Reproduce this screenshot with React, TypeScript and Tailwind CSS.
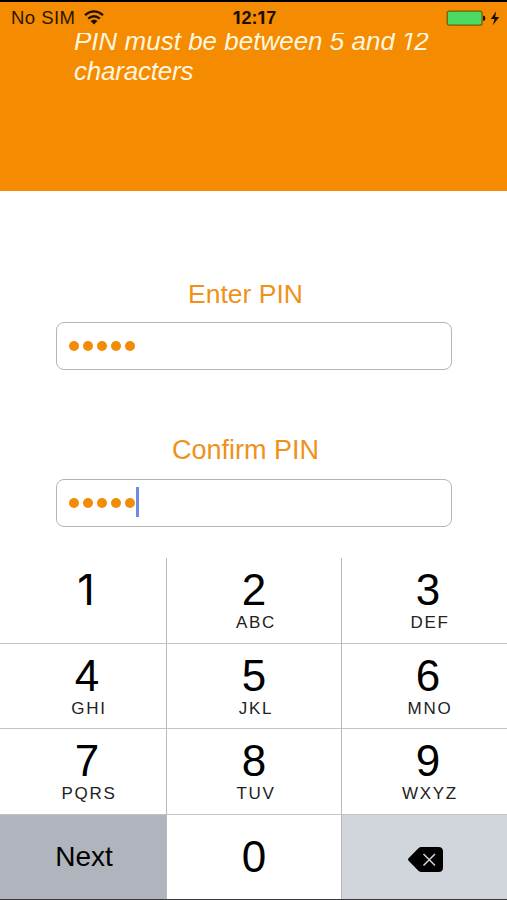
import React from "react";

type KeyDef = { digit: string; letters: string };

const rows: KeyDef[][] = [
  [
    { digit: "1", letters: "" },
    { digit: "2", letters: "ABC" },
    { digit: "3", letters: "DEF" },
  ],
  [
    { digit: "4", letters: "GHI" },
    { digit: "5", letters: "JKL" },
    { digit: "6", letters: "MNO" },
  ],
  [
    { digit: "7", letters: "PQRS" },
    { digit: "8", letters: "TUV" },
    { digit: "9", letters: "WXYZ" },
  ],
];

const cellStyles = [
  "border-r border-[#b9b9bb] pl-[8px]",
  "border-r border-[#b9b9bb]",
  "pl-[7px]",
];

function StatusBar() {
  return (
    <header className="flex h-[33px] items-center border-t-2 border-black pl-[11px] pr-[7px] text-[#2a1800]">
      <div className="flex flex-1 items-center gap-[9px]">
        <span className="text-[18.5px] leading-[31px] tracking-[0.45px] whitespace-nowrap">No SIM</span>
        <svg width="20" height="15" viewBox="0 0 20 15" fill="none" stroke="#1c1000" strokeWidth="2.3">
          <path d="M1 5.2Q10-2.4 19 5.2" />
          <path d="M4.2 8.7Q10 3.8 15.8 8.7" />
          <path d="M6.5 11.1Q10 8.1 13.5 11.1L10 14.5Z" fill="#1c1000" stroke="none" />
        </svg>
      </div>
      <span className="mt-px mr-[2px] text-[18px] font-bold leading-[31px] text-[#1c1000]">
        <span className="mr-px font-['Inter']">1</span>2:<span className="mr-px font-['Inter']">1</span>7
      </span>
      <div className="flex flex-1 items-center justify-end">
        <svg width="54" height="18" viewBox="0 0 54 18">
          <rect x="1.2" y="2.2" width="34.8" height="14" rx="2" fill="#4cd964" stroke="#756000" strokeWidth="1.3" />
          <path d="M37 6.7h.8q1.5 0 1.5 2.5t-1.5 2.5H37z" fill="#1c1000" />
          <path d="M50.2 2.2L44.8 10h3.7l-1.7 6.3L53.2 8h-4z" fill="#1c1000" />
        </svg>
      </div>
    </header>
  );
}

function PinField({ label, active = false }: { label: string; active?: boolean }) {
  return (
    <div className="flex flex-col items-center">
      <label
        className={`h-[30px] pr-[16px] leading-[30px] text-[#ee921a] ${
          active ? "-mt-px mb-px text-[27px]" : "text-[26.5px]"
        }`}
      >
        {label}
      </label>
      <div className="mt-[13px] flex h-[48px] w-[396px] items-center rounded-[8px] border border-[#b5b5b5] bg-white pl-[12px]">
        <div className="flex gap-[4.2px] pb-px">
          {[0, 1, 2, 3, 4].map((dot) => (
            <span key={dot} className="size-[10px] rounded-full bg-[#f28c06]" />
          ))}
        </div>
        {active && <span className="mb-[3px] ml-px h-[30px] w-[3px] bg-[#6f8ae8]" />}
      </div>
    </div>
  );
}

export default function App() {
  return (
    <main className="flex h-[900px] w-[507px] flex-col overflow-hidden bg-white font-['Liberation_Sans',Arial,sans-serif]">
      <section className="h-[191px] bg-[#f58b00]">
        <StatusBar />
        <div className="h-[60px] overflow-hidden pl-[74px]">
          <p className="-mt-[7px] w-[370px] text-[26px] leading-[30px] text-[#fff6df] italic">
            PIN must be between 5 and{" "}
            <span className="mr-px ml-px inline-block -skew-x-12 font-['Inter'] text-[25px] leading-[26px] not-italic">1</span>2
            <br />
            <span className="tracking-[-0.2px]">characters</span>
          </p>
        </div>
      </section>

      <form className="flex h-[367px] flex-col items-center gap-[66px] pt-[88px]">
        <PinField label="Enter PIN" />
        <PinField label="Confirm PIN" active />
      </form>

      <section className="grid h-[342px] grid-cols-[167px_175px_165px] grid-rows-[86px_85px_86px_84px] border-b border-[#3a3a3e] text-black">
        {rows.map((row) =>
          row.map((key, column) => (
            <button
              key={key.digit}
              className={`flex flex-col items-center border-b border-b-[#c4c4c6] pt-[7px] ${cellStyles[column]}`}
            >
              <span
                className={
                  key.digit === "1"
                    ? "pr-[2px] font-['Inter'] text-[43px] leading-[49px]"
                    : "text-[44px] leading-[49px]"
                }
              >
                {key.digit}
              </span>
              <span className="pl-[4px] text-[17px] leading-[18px] tracking-[1.7px] text-[#222]">{key.letters}</span>
            </button>
          ))
        )}
        <button className="flex items-center justify-center border-r border-[#b9b9bb] bg-[#b0b4bc] pl-[2px] text-[28px] leading-[32px]">
          Next
        </button>
        <button className="flex items-center justify-center border-r border-[#b9b9bb] text-[44px] leading-[50px]">
          0
        </button>
        <button className="flex items-center justify-center bg-[#d1d5dc] pl-[2px]" aria-label="Delete">
          <svg width="36" height="27" viewBox="0 0 36 27" className="mt-[4px]">
            <path d="M.6 12.2L10.4 2.2Q11.7 1 13.5 1H30.5Q35 1 35 5.5V21.5Q35 26 30.5 26H13.5Q11.7 26 10.4 24.8L.6 14.7Q-.4 13.4.6 12.2Z" fill="#000" />
            <path d="M15.5 8L27 19.5M27 8L15.5 19.5" stroke="#d1d5dc" strokeWidth="1.5" />
          </svg>
        </button>
      </section>
    </main>
  );
}
